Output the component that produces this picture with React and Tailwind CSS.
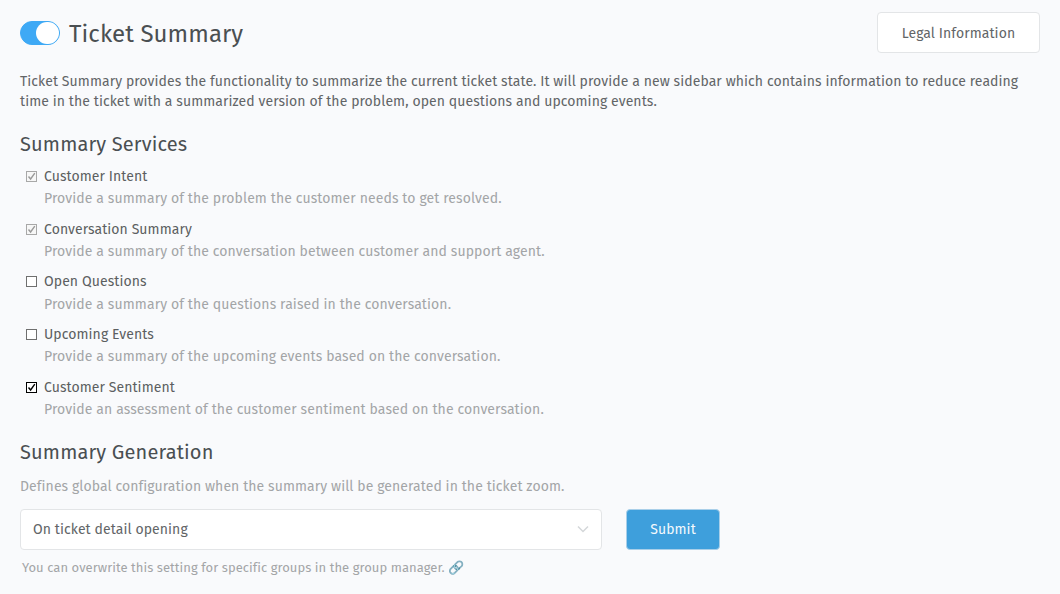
import React from "react";

const f = { fontFamily: '"Fira Sans","Noto Sans",sans-serif' };

function Box({ state }) {
  return (
    <span className={`w-[11px] h-[11px] border flex items-center justify-center ${state === "on" ? "border-black bg-white" : state === "dis" ? "border-[#a8a8a8] bg-[#f7f7f7]" : "border-[#6f6f6f] bg-white"}`}>
      {state !== "off" && (
        <svg width="9" height="9" viewBox="0 0 9 9" fill="none">
          <path d="M1.5 4.5L3.6 7L7.8 1.2" stroke={state === "on" ? "#000" : "#9a9a9a"} strokeWidth="1.4" />
        </svg>
      )}
    </span>
  );
}

function Item({ state, title, desc }) {
  return (
    <div className="flex h-[52.7px]">
      <div className="w-[24px] pl-[6px] pt-[4px]"><Box state={state} /></div>
      <div>
        <div className="text-[14px] leading-[20px] text-[#5c5f61]">{title}</div>
        <div className="text-[14px] leading-[20px] mt-[2.4px] text-[#a3a5a7] tracking-[0.1px]">{desc}</div>
      </div>
    </div>
  );
}

export default function App() {
  const items = [
    ["dis", "Customer Intent", "Provide a summary of the problem the customer needs to get resolved."],
    ["dis", "Conversation Summary", "Provide a summary of the conversation between customer and support agent."],
    ["off", "Open Questions", "Provide a summary of the questions raised in the conversation."],
    ["off", "Upcoming Events", "Provide a summary of the upcoming events based on the conversation."],
    ["on", "Customer Sentiment", "Provide an assessment of the customer sentiment based on the conversation."],
  ];
  return (
    <div style={f} className="w-[1060px] h-[594px] bg-[#f9fafc] px-[20px] pt-[12px] overflow-hidden text-[#626567] tracking-[0.08px]">
      <div className="flex items-center justify-between h-[42px]">
        <div className="flex items-center gap-[9px]">
          <div className="w-[40px] h-[24px] rounded-full bg-[#3ea9f5] flex items-center justify-end border border-[#3ea9f5]">
            <div className="w-[23px] h-[22px] rounded-full bg-white"></div>
          </div>
          <h1 className="text-[24px] leading-[30px] mt-[2px] text-[#4a4f52]">Ticket Summary</h1>
        </div>
        <button className="self-start w-[163px] h-[41px] pt-px bg-white border border-[#e3e5e7] rounded-[4px] text-[14px]">Legal Information</button>
      </div>
      <p className="text-[14px] leading-[20px] mt-[17px] pt-px">Ticket Summary provides the functionality to summarize the current ticket state. It will provide a new sidebar which contains information to reduce reading time in the ticket with a summarized version of the problem, open questions and upcoming events.</p>
      <h2 className="text-[20px] leading-[26px] mt-[19px] text-[#4a4f52] tracking-[0.15px]">Summary Services</h2>
      <div className="mt-[10px]">
        {items.map((i) => <Item key={i[1]} state={i[0]} title={i[1]} desc={i[2]} />)}
      </div>
      <h2 className="text-[20px] leading-[26px] mt-[8.5px] text-[#4a4f52] tracking-[0.15px]">Summary Generation</h2>
      <p className="text-[14px] leading-[20px] mt-[12px] text-[#a3a5a7]">Defines global configuration when the summary will be generated in the ticket zoom.</p>
      <div className="flex gap-[24px] mt-[12px] items-start">
        <div className="w-[582px] h-[41px] bg-white border border-[#e3e5e7] rounded-[4px] flex items-center justify-between pl-[12px] pr-[12px] text-[14px]">
          <span>On ticket detail opening</span>
          <svg width="12" height="8" viewBox="0 0 12 8" fill="none"><path d="M1 1.5L6 6.5L11 1.5" stroke="#d4d7d9" strokeWidth="1.5" /></svg>
        </div>
        <button className="w-[94px] h-[41px] bg-[#3e9fdc] text-[#f3f9fd] rounded-[4px] text-[14px] border border-[#a9cfe9]">Submit</button>
      </div>
      <div className="text-[13px] leading-[18px] mt-[9px] ml-[2px] text-[#a3a5a7] tracking-[0.05px]">You can overwrite this setting for specific groups in the group manager. 🔗</div>
    </div>
  );
}
